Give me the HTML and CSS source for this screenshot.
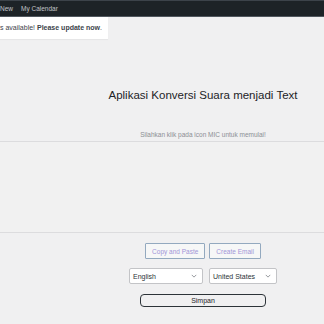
FILE: index.html
```html
<!DOCTYPE html>
<html lang="id">
<head>
<meta charset="utf-8">
<title>Aplikasi Konversi Suara menjadi Text</title>
<link rel="stylesheet" href="styles.css">
</head>
<body>
<div class="adminbar">
  <span class="ab-item">New</span>
  <span class="ab-item">My Calendar</span>
</div>
<div class="notice">s available! <b>Please update now</b>.</div>
<section class="head">
  <h1 class="title">Aplikasi Konversi Suara menjadi Text</h1>
  <p class="hint">Silahkan klik pada icon MIC untuk memulai!</p>
</section>
<div class="editor"></div>
<section class="controls">
  <div class="btn-row">
    <button class="btn-link">Copy and Paste</button>
    <button class="btn-link">Create Email</button>
  </div>
  <div class="select-row">
    <div class="select sel-lang"><span>English</span><svg class="chev" viewBox="0 0 8 5" width="6" height="4"><path d="M1 1l3 3 3-3" fill="none" stroke="#8c8f94" stroke-width="1.2"/></svg></div>
    <div class="select sel-region"><span>United States</span><svg class="chev" viewBox="0 0 8 5" width="6" height="4"><path d="M1 1l3 3 3-3" fill="none" stroke="#8c8f94" stroke-width="1.2"/></svg></div>
  </div>
  <button class="btn-save">Simpan</button>
</section>
</body>
</html>
```
FILE: styles.css
```css
html, body {
  margin: 0;
  padding: 0;
}
body {
  background: #f0f0f1;
  font-family: "Liberation Sans", Arial, sans-serif;
  color: #3c434a;
  width: 324px;
  height: 324px;
  overflow: hidden;
}
.adminbar {
  height: 17px;
  background: #1d2327;
  border-top: 1px solid #3c434a;
  box-sizing: border-box;
  display: flex;
  align-items: center;
  gap: 8px;
  padding-left: 0;
  font-size: 6.5px;
  color: #c3c4c7;
  border-bottom: 1px solid #50575e;
}
.notice {
  width: 108px;
  height: 22px;
  background: #fff;
  box-shadow: 0 1px 1px rgba(0,0,0,0.04);
  font-size: 7px;
  line-height: 22px;
  color: #3c434a;
  white-space: nowrap;
  overflow: hidden;
}
.notice b {
  font-weight: bold;
  color: #3c434a;
}
.head {
  margin-left: 82px;
  display: flex;
  flex-direction: column;
  align-items: center;
}
.title {
  margin: 49px 0 0;
  font-size: 11.5px;
  line-height: 14px;
  font-weight: normal;
  color: #1d2327;
}
.hint {
  margin: 29px 0 0;
  font-size: 6.5px;
  line-height: 8px;
  color: #8c8f94;
}
.editor {
  margin-top: 2px;
  height: 90px;
  border-top: 1px solid #dcdcde;
  border-bottom: 1px solid #dcdcde;
  background: #f1f1f1;
}
.controls {
  margin-left: 82px;
  display: flex;
  flex-direction: column;
  align-items: center;
}
.btn-row {
  margin-top: 10px;
  display: flex;
  gap: 4px;
}
.btn-link {
  height: 16px;
  padding: 0 6px;
  border: 1px solid #93a9bf;
  border-radius: 1px;
  background: #f6f7f7;
  color: #a196d8;
  font-family: "Liberation Sans", Arial, sans-serif;
  font-size: 6.5px;
}
.select-row {
  margin-top: 9px;
  display: flex;
  gap: 6px;
}
.select {
  height: 16px;
  box-sizing: border-box;
  border: 1px solid #c3c4c7;
  border-radius: 2px;
  background: #fff;
  display: flex;
  align-items: center;
  justify-content: space-between;
  padding: 0 5px 0 3px;
  font-size: 7px;
  color: #2c3338;
}
.sel-lang { width: 74px; }
.sel-region { width: 68px; }
.chev { display: block; }
.btn-save {
  margin-top: 10px;
  width: 126px;
  height: 13px;
  border: 1px solid #2c3338;
  border-radius: 4px;
  background: #f0f0f1;
  color: #1d2327;
  font-family: "Liberation Sans", Arial, sans-serif;
  font-size: 7px;
  padding: 0;
}
```
